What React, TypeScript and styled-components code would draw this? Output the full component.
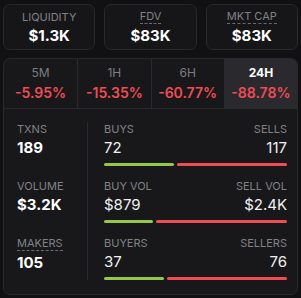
import React from 'react';
import styled, { createGlobalStyle } from 'styled-components';

const Global = createGlobalStyle`
	html, body {
		margin: 0;
		background: #111113;
	}
	body {
		font-family: Inter, "Noto Sans", sans-serif;
		color: #fff;
	}
`;

const Page = styled.div`
	width: 301px;
	height: 298px;
	box-sizing: border-box;
	padding: 4px 3px 3px;
	display: flex;
	flex-direction: column;
	gap: 8px;
`;

const StatRow = styled.div`
	display: grid;
	grid-template-columns: repeat(3, 1fr);
	gap: 9px;
`;

const StatCard = styled.div`
	height: 46px;
	box-sizing: border-box;
	border: 1px solid #28282b;
	border-radius: 7px;
	background: #161618;
	display: flex;
	flex-direction: column;
	align-items: center;
	justify-content: center;
	gap: 3px;
`;

const Label = styled.span<{ $dashed?: boolean }>`
	font-size: 11px;
	line-height: 14px;
	color: #818187;
	text-transform: uppercase;
	border-bottom: ${p => (p.$dashed ? '1px dashed #6a6a70' : 'none')};
`;

const StatValue = styled.span`
	font-size: 15px;
	line-height: 18px;
	font-weight: 700;
`;

const Panel = styled.div`
	flex: 1;
	border: 1px solid #28282b;
	border-radius: 7px;
	background: #18181a;
	overflow: hidden;
	display: flex;
	flex-direction: column;
`;

const Tabs = styled.div`
	display: grid;
	grid-template-columns: repeat(4, 1fr);
	height: 49px;
	border-bottom: 1px solid #2a2a2e;
`;

const Tab = styled.div<{ $active?: boolean }>`
	display: flex;
	flex-direction: column;
	align-items: center;
	justify-content: center;
	gap: 4px;
	background: ${p => (p.$active ? '#2a2a2e' : 'transparent')};
	border-left: 1px solid #2a2a2e;
	&:first-child {
		border-left: none;
	}
	> .period {
		font-size: 12px;
		line-height: 14px;
		color: ${p => (p.$active ? '#fff' : '#7d7d83')};
		font-weight: ${p => (p.$active ? 700 : 400)};
	}
	> .change {
		font-size: 14px;
		line-height: 17px;
		font-weight: 600;
		color: #ef4c53;
	}
`;

const Body = styled.div`
	display: grid;
	grid-template-columns: 84px 1fr;
	padding: 13px 10px 0 0;
`;

const LeftCol = styled.div`
	display: flex;
	flex-direction: column;
	gap: 13px;
	padding-left: 13px;
	border-right: 1px solid #2a2a2e;
`;

const RightCol = styled.div`
	display: flex;
	flex-direction: column;
	gap: 13px;
	padding-left: 16px;
`;

const Metric = styled.div`
	height: 44px;
	display: flex;
	flex-direction: column;
	align-items: flex-start;
	> .value {
		font-size: 15px;
		line-height: 24px;
		font-weight: 700;
	}
`;

const Split = styled.div`
	height: 44px;
	display: flex;
	flex-direction: column;
`;

const SplitLine = styled.div`
	display: flex;
	justify-content: space-between;
	align-items: center;
	> .num {
		font-size: 15px;
		line-height: 24px;
		color: #f0f0f2;
	}
`;

const Bar = styled.div`
	display: flex;
	gap: 3px;
	margin-top: 3px;
	height: 3px;
	> span {
		border-radius: 2px;
		height: 3px;
	}
	> .buy {
		background: #95c84a;
	}
	> .sell {
		background: #ef4c53;
		flex: 1;
	}
`;

const stats = [
	{ label: 'LIQUIDITY', value: '$1.3K', dashed: false },
	{ label: 'FDV', value: '$83K', dashed: true },
	{ label: 'MKT CAP', value: '$83K', dashed: true },
];

const tabs = [
	{ period: '5M', change: '-5.95%' },
	{ period: '1H', change: '-15.35%' },
	{ period: '6H', change: '-60.77%' },
	{ period: '24H', change: '-88.78%', active: true },
];

const metrics = [
	{ label: 'TXNS', value: '189' },
	{ label: 'VOLUME', value: '$3.2K' },
	{ label: 'MAKERS', value: '105', dashed: true },
];

const splits = [
	{ left: 'BUYS', right: 'SELLS', a: '72', b: '117', ratio: 72 / 189 },
	{ left: 'BUY VOL', right: 'SELL VOL', a: '$879', b: '$2.4K', ratio: 879 / 3279 },
	{ left: 'BUYERS', right: 'SELLERS', a: '37', b: '76', ratio: 37 / 113 },
];

const App: React.FC = () => {
	return (
		<>
			<Global/>
			<Page>
				<StatRow>
					{stats.map(s => (
						<StatCard key={s.label}>
							<Label $dashed={s.dashed}>{s.label}</Label>
							<StatValue>{s.value}</StatValue>
						</StatCard>
					))}
				</StatRow>
				<Panel>
					<Tabs>
						{tabs.map(t => (
							<Tab key={t.period} $active={t.active}>
								<span className="period">{t.period}</span>
								<span className="change">{t.change}</span>
							</Tab>
						))}
					</Tabs>
					<Body>
						<LeftCol>
							{metrics.map(m => (
								<Metric key={m.label}>
									<Label $dashed={m.dashed}>{m.label}</Label>
									<span className="value">{m.value}</span>
								</Metric>
							))}
						</LeftCol>
						<RightCol>
							{splits.map(s => (
								<Split key={s.left}>
									<SplitLine>
										<Label>{s.left}</Label>
										<Label>{s.right}</Label>
									</SplitLine>
									<SplitLine>
										<span className="num">{s.a}</span>
										<span className="num">{s.b}</span>
									</SplitLine>
									<Bar>
										<span className="buy" style={{ width: `${s.ratio * 100}%` }}/>
										<span className="sell"/>
									</Bar>
								</Split>
							))}
						</RightCol>
					</Body>
				</Panel>
			</Page>
		</>
	);
};

export default App;
